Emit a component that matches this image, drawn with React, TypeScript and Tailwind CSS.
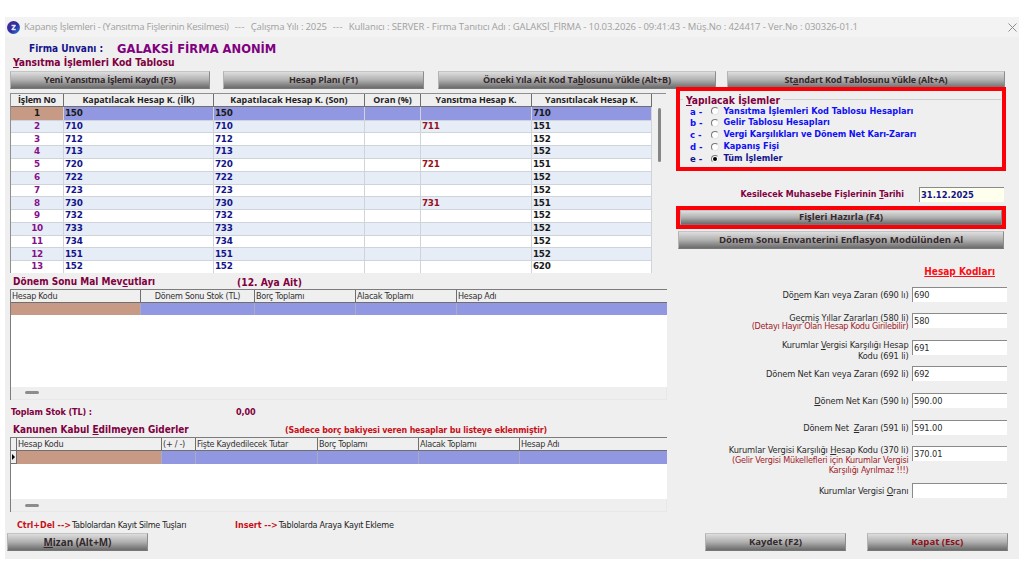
import React, { useState } from 'react';

// --- Types & data ---
interface KodRow {
  no: number;
  ilk: string;
  son: string;
  yansitma?: string;
  yansitilacak: string;
}

const kodTablosu: KodRow[] = [
  { no: 1, ilk: '150', son: '150', yansitilacak: '710' },
  { no: 2, ilk: '710', son: '710', yansitma: '711', yansitilacak: '151' },
  { no: 3, ilk: '712', son: '712', yansitilacak: '152' },
  { no: 4, ilk: '713', son: '713', yansitilacak: '152' },
  { no: 5, ilk: '720', son: '720', yansitma: '721', yansitilacak: '151' },
  { no: 6, ilk: '722', son: '722', yansitilacak: '152' },
  { no: 7, ilk: '723', son: '723', yansitilacak: '152' },
  { no: 8, ilk: '730', son: '730', yansitma: '731', yansitilacak: '151' },
  { no: 9, ilk: '732', son: '732', yansitilacak: '152' },
  { no: 10, ilk: '733', son: '733', yansitilacak: '152' },
  { no: 11, ilk: '734', son: '734', yansitilacak: '152' },
  { no: 12, ilk: '151', son: '151', yansitilacak: '152' },
  { no: 13, ilk: '152', son: '152', yansitilacak: '620' },
];

const islemler = [
  { key: 'a', label: 'Yansıtma İşlemleri Kod Tablosu Hesapları' },
  { key: 'b', label: 'Gelir Tablosu Hesapları' },
  { key: 'c', label: 'Vergi Karşılıkları ve Dönem Net Karı-Zararı' },
  { key: 'd', label: 'Kapanış Fişi' },
  { key: 'e', label: 'Tüm İşlemler' },
];

// --- Shared pieces ---
const Btn: React.FC<{ className?: string; children: React.ReactNode }> = ({ className = '', children }) => (
  <button
    className={`flex shrink-0 items-center justify-center whitespace-pre border border-t-[#c4c4c4] border-l-[#b4b4b4] border-r-[#8c8c8c] border-b-[#777] bg-linear-to-b from-[#dedede] via-[#b0b0b0] to-[#6c6c6c] font-['Open_Sans','Noto_Sans',sans-serif] font-bold ${className}`}
  >
    {children}
  </button>
);

const HeadCell: React.FC<{ className?: string; children?: React.ReactNode }> = ({ className = '', children }) => (
  <div className={`h-full overflow-hidden whitespace-nowrap border-r border-[#6f6f6f] ${className}`}>{children}</div>
);

const Field: React.FC<{ value: string; className?: string; labelClass?: string; children: React.ReactNode }> = ({
  value,
  className = 'h-[26.6px]',
  labelClass = 'leading-[16.5px]',
  children,
}) => {
  const [text, setText] = useState(value);
  return (
    <div className={`flex shrink-0 items-start justify-end gap-[3.5px] ${className}`}>
      <div className={`whitespace-pre text-right text-[9.2px] tracking-[-0.15px] text-[#2a2a2a] ${labelClass}`}>{children}</div>
      <input
        value={text}
        onChange={e => setText(e.target.value)}
        className="h-[15px] w-[95px] border-t border-l border-[#8a8a8a] bg-white pb-px pl-px text-[9.2px] tracking-[-0.1px] text-[#2a2a2a] outline-none"
      />
    </div>
  );
};

// --- Title bar ---
const TitleBar: React.FC = () => (
  <div className="flex h-[20px] items-center bg-[#f3f3f3] pl-[2px] pr-[2px] font-['Open_Sans','Noto_Sans',sans-serif] text-[9.5px] leading-[20px] text-[#a0a0a0]">
    <svg className="mr-[4px] h-[13px] w-[13px] shrink-0" viewBox="0 0 26 26">
      <defs>
        <linearGradient id="logo" x1="0" y1="0" x2="1" y2="1">
          <stop offset="0" stopColor="#4a2a9c" />
          <stop offset="0.55" stopColor="#2a2f9e" />
          <stop offset="1" stopColor="#2a86e0" />
        </linearGradient>
      </defs>
      <circle cx="13" cy="13" r="13" fill="url(#logo)" />
      <path d="M9 9 H16.5 L10 17 H17.5" fill="none" stroke="#e8e4ff" strokeWidth="2.6" strokeLinejoin="round" />
    </svg>
    <div className="flex flex-1 gap-[6px] whitespace-nowrap pb-px">
      <span className="tracking-[-0.22px]">Kapanış İşlemleri - (Yansıtma Fişlerinin Kesilmesi)</span>
      <span className="tracking-[0.3px]">---</span>
      <span className="tracking-[-0.15px]">Çalışma Yılı : 2025</span>
      <span className="tracking-[0.3px]">---</span>
      <span className="tracking-[-0.115px]">
        Kullanıcı : SERVER - Firma Tanıtıcı Adı : GALAKSİ_FİRMA - 10.03.2026 - 09:41:43 - Müş.No : 424417 - Ver.No : 030326-01.1
      </span>
    </div>
    <svg className="h-[9px] w-[9px]" viewBox="0 0 9 9" stroke="#8c8c8c" strokeWidth="1">
      <path d="M0.5 0.5 L8.5 8.5 M8.5 0.5 L0.5 8.5" />
    </svg>
  </div>
);

// --- Tables ---
const KodTablosu: React.FC = () => {
  const [selected, setSelected] = useState(1);
  const cols = 'grid grid-cols-[53px_150px_151px_56px_111px_120px]';
  return (
    <div className="flex h-[180px] w-[656px] shrink-0 overflow-hidden border-t border-l border-[#8f8f8f]">
      <div className="w-[641px] shrink-0">
        <div className={`${cols} h-[13.2px] border-b border-[#6f6f6f] bg-[#efefef] text-center font-['Open_Sans','Noto_Sans',sans-serif] text-[8.9px] font-bold leading-[12px] text-[#222]`}>
          <HeadCell className="tracking-[-0.15px]">İşlem No</HeadCell>
          <HeadCell>Kapatılacak Hesap K. (İlk)</HeadCell>
          <HeadCell>Kapatılacak Hesap K. (Son)</HeadCell>
          <HeadCell>Oran (%)</HeadCell>
          <HeadCell className="tracking-[-0.07px]">Yansıtma Hesap K.</HeadCell>
          <HeadCell className="tracking-[-0.07px]">Yansıtılacak Hesap K.</HeadCell>
        </div>
        {kodTablosu.map(row => {
          const active = row.no === selected;
          const cell = 'border-r border-b border-[#cfd3da] pl-[1px]';
          return (
            <div
              key={row.no}
              onClick={() => setSelected(row.no)}
              className={`${cols} h-[12.77px] font-['DejaVu_Sans',sans-serif] text-[8.8px] font-bold leading-[12.5px] tracking-[-0.25px] ${active ? 'bg-[#9197e0] text-[#1a1a1a]' : row.no % 2 === 0 ? 'bg-[#e6edf7] text-[#14148c]' : 'bg-white text-[#14148c]'}`}
            >
              <div className={`border-r border-b border-[#cfd3da] text-center ${active ? 'bg-[#c69a84]' : 'text-[#86108a]'}`}>{row.no}</div>
              <div className={cell}>{row.ilk}</div>
              <div className={cell}>{row.son}</div>
              <div className={cell} />
              <div className={`${cell} text-[#98101c]`}>{row.yansitma}</div>
              <div className={`${cell} text-[#1a1a1a]`}>{row.yansitilacak}</div>
            </div>
          );
        })}
      </div>
      <div className="flex-1 pl-[6px] pt-[14px]">
        <div className="h-[54px] w-[3px] rounded-full bg-[#858585]" />
      </div>
    </div>
  );
};

const EmptyTable: React.FC<{ cols: string; heads: string[]; centered?: number; marker?: boolean; height: string }> = ({
  cols,
  heads,
  centered,
  marker,
  height,
}) => (
  <div className={`flex w-[657px] shrink-0 flex-col border-t border-l border-[#7c7c7c] ${height}`}>
    <div className={`grid h-[13px] shrink-0 border-b border-[#6f6f6f] text-[9px] leading-[13px] tracking-[-0.28px] text-[#333] ${cols}`}>
      {marker && <HeadCell />}
      {heads.map((h, i) => (
        <HeadCell key={h} className={`${i === heads.length - 1 ? 'border-r-0' : ''} ${i === centered ? 'text-center' : 'pl-px'}`}>
          {h}
        </HeadCell>
      ))}
    </div>
    <div className={`grid h-[12.5px] shrink-0 bg-[#9197e0] ${cols}`}>
      {marker && (
        <div className="flex items-center border-r border-b border-[#6f6f6f] bg-[#efefef] pl-px">
          <svg className="h-[6px] w-[3px]" viewBox="0 0 3 6">
            <path d="M0 0 L3 3 L0 6 Z" fill="#000" />
          </svg>
        </div>
      )}
      {heads.map((h, i) => (
        <div key={h} className={`border-[#a9a9c8] ${i < heads.length - 1 ? 'border-r' : ''} ${i === 0 ? 'bg-[#c69a84]' : ''}`} />
      ))}
    </div>
    <div className="flex-1 bg-white" />
    <div className="flex h-[13px] shrink-0 items-center border-r border-b border-[#e8e8e8] bg-[#efefef] pl-[14px]">
      <div className="h-[3px] w-[14px] rounded-full bg-[#8c8c8c]" />
    </div>
  </div>
);

// --- Right panel ---
const YapilacakIslemler: React.FC = () => {
  const [secili, setSecili] = useState('e');
  return (
    <div className="-mt-[2px] h-[84.5px] w-[330px] shrink-0 border-4 border-[#fb0007]">
      <div className="flex items-center pr-px pt-[3px]">
        <div className="h-px w-[3px] bg-[#cfcfcf]" />
        <div className="mx-[3px] text-[10.25px] font-bold leading-[12px] text-[#800040]"><u>Y</u>apılacak İşlemler</div>
        <div className="h-px flex-1 bg-[#cfcfcf]" />
      </div>
      <div className="text-[9.1px] font-bold leading-[11.8px]">
        {islemler.map(({ key, label }) => (
          <div
            key={key}
            onClick={() => setSecili(key)}
            className={`flex h-[11.9px] items-center whitespace-nowrap pl-[10px] ${secili === key ? 'text-[#14148c]' : 'text-[#1010f4]'} ${key === 'c' ? 'tracking-[-0.11px]' : ''}`}
          >
            <span className="w-[20.5px] text-[9.5px] tracking-normal">{key} -</span>
            <span className="mr-[5px] flex h-[8px] w-[8px] items-center justify-center rounded-full border border-t-[#777] border-l-[#777] border-r-[#e4e4e4] border-b-[#e4e4e4] bg-white">
              {secili === key && <span className="h-[4px] w-[4px] rounded-full bg-black" />}
            </span>
            <span>{label}</span>
          </div>
        ))}
      </div>
    </div>
  );
};

const HesapKodlari: React.FC = () => (
  <div className="mt-[16px] flex w-[331px] flex-col">
    <div className="mb-[7.7px] h-[14px] pr-[12px] text-right text-[10px] font-bold leading-[14px] text-[#f81018] underline">Hesap Kodları</div>
    <Field value="690">Dö<u>n</u>em Karı veya Zararı (690 lı)</Field>
    <Field value="580" labelClass="leading-[9.2px]">
      <div>Geçmiş Yıllar Zararları (580 li)</div>
      <div className="text-[9px] tracking-[-0.26px] text-[#a02028]">(Detayı Hayır Olan Hesap Kodu Girilebilir)</div>
    </Field>
    <Field value="691" labelClass="-mt-px leading-[11px]">
      <div>Kurumlar <u>V</u>ergisi Karşılığı Hesap</div>
      <div>Kodu (691 li)</div>
    </Field>
    <Field value="692">Dönem Net Karı veya Zararı (692 li)</Field>
    <Field value="590.00"><u>D</u>önem Net Karı (590 lı)</Field>
    <Field value="591.00">Dönem Net  <u>Z</u>ararı (591 li)</Field>
    <Field value="370.01" className="h-[36.6px]" labelClass="-mt-[1.5px] leading-[10px]">
      <div>Kurumlar Vergisi Karşılığı <u>H</u>esap Kodu (370 li)</div>
      <div className="text-[9px] tracking-[-0.2px] text-[#a02028]">(Gelir Vergisi Mükellefleri için Kurumlar Vergisi</div>
      <div className="text-[9px] tracking-[-0.2px] text-[#a02028]">Karşılığı Ayrılmaz !!!)</div>
    </Field>
    <Field value="" className="h-[20px]">Kurumlar Vergisi <u>O</u>ranı</Field>
  </div>
);

const App: React.FC = () => (
  <div className="h-[576px] w-[1024px] overflow-hidden bg-white pl-[5px] pt-[17px] font-['DejaVu_Sans_Condensed','DejaVu_Sans',sans-serif]">
    <div className="h-[542px] w-[1014px] bg-[#efefef]">
      <TitleBar />

      <div className="flex h-[19px] items-center gap-[14px] pl-[24px] pt-[4px] font-bold">
        <span className="text-[10px] text-[#14148c]">Firma Unvanı :</span>
        <span className="text-[12.8px] text-[#800080]">GALAKSİ FİRMA ANONİM</span>
      </div>
      <div className="h-[15px] pl-[8px] text-[10.28px] font-bold leading-[12px] text-[#800040]"><u>Y</u>ansıtma İşlemleri Kod Tablosu</div>

      <div className="flex h-[17.5px] pl-[5px] text-[9px] text-[#33282c]">
        <Btn className="mr-[13px] w-[200px] tracking-[-0.25px]">Yeni Yansıtma İşlemi Kaydı (F3)</Btn>
        <Btn className="mr-[14px] w-[201px] tracking-[-0.15px]">Hesap Planı (F1)</Btn>
        <Btn className="mr-[11px] w-[278px] tracking-[-0.15px]">Önceki Yıla Ait Kod Ta<u>b</u>losunu Yükle (Alt+B)</Btn>
        <Btn className="w-[278px] tracking-[-0.15px]">St<u>a</u>ndart Kod Tablosunu Yükle (Alt+A)</Btn>
      </div>

      <div className="flex h-[444.5px] pl-[5px]">
        <div className="flex w-[666px] flex-col pt-[4.5px]">
          <KodTablosu />

          <div className="mt-[3px] flex h-[12.5px] shrink-0 pl-[3px] text-[10px] font-bold leading-[12.5px] text-[#800040]">
            <span className="w-[224px]">Dönem Sonu Mal Mev<u>c</u>utları</span>
            <span className="text-[10.25px]">(12. Aya Ait)</span>
          </div>
          <EmptyTable
            cols="grid-cols-[130px_114px_101px_101px_1fr]"
            heads={['Hesap Kodu', 'Dönem Sonu Stok (TL)', 'Borç Toplamı', 'Alacak Toplamı', 'Hesap Adı']}
            centered={1}
            height="h-[111px]"
          />

          <div className="mt-[5px] flex h-[14px] shrink-0 pl-[1px] text-[9px] font-bold leading-[14px] tracking-[-0.1px] text-[#800040]">
            <span className="w-[225px]">Toplam Stok (TL) :</span>
            <span>0,00</span>
          </div>
          <div className="mt-[5px] flex h-[13.5px] shrink-0 items-center whitespace-nowrap pl-[3px] font-bold">
            <span className="w-[272px] text-[9.95px] text-[#800040]">Kanunen Kabul <u>E</u>dilmeyen Giderler</span>
            <span className="text-[8.8px] tracking-[-0.15px] text-[#c81018]">(Sadece borç bakiyesi veren hesaplar bu listeye eklenmiştir)</span>
          </div>
          <EmptyTable
            cols="grid-cols-[6px_145px_34px_122px_101px_101px_1fr]"
            heads={['Hesap Kodu', '(+ / -)', 'Fişte Kaydedilecek Tutar', 'Borç Toplamı', 'Alacak Toplamı', 'Hesap Adı']}
            marker
            height="h-[75px]"
          />

          <div className="mt-[6px] flex h-[14px] shrink-0 whitespace-nowrap pl-[7px] text-[9px] leading-[14px] tracking-[-0.27px] text-[#222]">
            <div className="w-[218px]">
              <span className="mr-[1px] text-[8.9px] font-bold tracking-normal text-[#c81018]">Ctrl+Del --&gt;</span>
              Tablolardan Kayıt Silme Tuşları
            </div>
            <div>
              <span className="mr-[1px] text-[8.9px] font-bold tracking-normal text-[#c81018]">Insert --&gt;</span>
              Tablolarda Araya Kayıt Ekleme
            </div>
          </div>
        </div>

        <div className="relative flex flex-col">
          <YapilacakIslemler />
          <div className="mt-[16px] flex h-[15px] shrink-0 items-center justify-end pr-[3px] text-[8.9px] font-bold text-[#800040]">
            <span>Kesilecek Muhasebe Fişlerinin <u>T</u>arihi</span>
            <input
              defaultValue="31.12.2025"
              className="ml-[15px] h-[15px] w-[85px] border-t border-l border-[#8a8a8a] bg-[#ffffee] pb-px pl-px text-[9.3px] font-bold text-[#14148c] outline-none"
            />
          </div>
          <div className="mt-[4px] flex h-[23px] w-[330px] shrink-0 border-4 border-[#fb0007]">
            <Btn className="h-full w-full text-[9.5px] text-[#33282c]">Fişleri Hazırla (F4)</Btn>
          </div>
          <Btn className="ml-[2px] mt-[2px] h-[18px] w-[326px] text-[9.65px] text-[#33282c]">Dönem Sonu Envanterini Enflasyon Modülünden Al</Btn>
          <HesapKodlari />
        </div>
      </div>

      <div className="flex h-[18px] pl-[2px]">
        <Btn className="mr-[557px] w-[141px] text-[9.9px] text-[#33282c]"><u>M</u>izan (Alt+M)</Btn>
        <Btn className="mr-[21px] w-[141px] text-[9.55px] text-[#33282c]">Kaydet (F2)</Btn>
        <Btn className="w-[140.5px] text-[9.55px] text-[#8c1018]">Kapat (Esc)</Btn>
      </div>
    </div>
  </div>
);

export default App;
